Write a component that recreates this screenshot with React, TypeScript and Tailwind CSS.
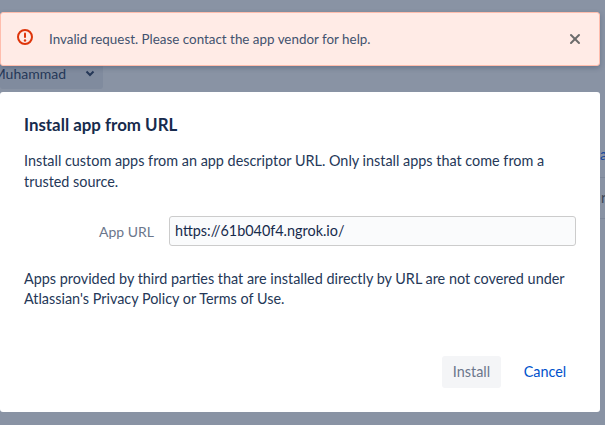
import { X } from "lucide-react";

const font = "font-['Lato','Noto_Sans',sans-serif]";

function AlertIcon() {
  return (
    <svg width="18" height="18" viewBox="0 0 18 18" fill="none" className="-mt-[4px] shrink-0">
      <circle cx="9" cy="9" r="7" stroke="#de350b" strokeWidth="2" />
      <rect x="8" y="4.5" width="2" height="5.5" rx="1" fill="#de350b" />
      <circle cx="9" cy="12.5" r="1.2" fill="#de350b" />
    </svg>
  );
}

export default function App() {
  return (
    <div className={`${font} relative h-[425px] w-[605px] overflow-hidden bg-[#8993a4] text-[14.4px] text-[#172b4d]`}>
      {/* page behind the dialog */}
      <div className="absolute left-0 top-[60px] flex h-[29px] w-[103px] items-center justify-end gap-[19px] rounded-[3px] bg-[#808b9e] pb-[2px] pr-[8px] text-[14px] text-[#253858]">
        <span className="shrink-0 whitespace-nowrap">Muhammad</span>
        <svg width="10" height="7" viewBox="0 0 10 7" fill="none" className="shrink-0">
          <path d="M1.5 1.5 5 5l3.5-3.5" stroke="#253858" strokeWidth="2" />
        </svg>
      </div>
      <div className="absolute left-[600px] top-[144px] text-[#1a4a9c]">a</div>
      <div className="absolute left-[600px] top-[177px] h-px w-[5px] bg-[#7d8799]" />
      <div className="absolute left-[601px] top-[187px] text-[#3a4658]">r</div>
      <div className="absolute left-[600px] top-[218px] h-px w-[5px] bg-[#7d8799]" />

      <div className="absolute left-0 top-[12px] flex h-[54px] w-[600px] items-center rounded-[3px] border border-[#ffbdad] bg-[#ffebe6] pl-[15px] pr-[16px] shadow-[0_2px_5px_rgba(9,30,66,0.25)]">
        <AlertIcon />
        <span className="ml-[15px] flex-1 text-[13.4px] text-[#42526e]">Invalid request. Please contact the app vendor for help.</span>
        <X size={16} strokeWidth={3} className="text-[#6b6b6b]" />
      </div>

      <div className="absolute left-0 top-[92px] flex h-[320px] w-[600px] flex-col rounded-[3px] bg-white px-6 pb-[24px] pt-[23px]">
        <h2 className="text-[16.9px] font-bold leading-5">Install app from URL</h2>
        <p className="mt-[15px] w-[552px] leading-[21px] text-[#253858]">
          Install custom apps from an app descriptor URL. Only install apps that come from a trusted source.
        </p>
        <div className="mt-[24px] flex items-center">
          <label className="w-[130px] text-right text-[14px] text-[#6b778c]">App URL</label>
          <div className="ml-[15px] flex h-[30px] w-[407px] items-center rounded-[3px] border border-[#ccc] bg-[#fafbfc] px-[5px]">
            https://61b040f4.ngrok.io/
          </div>
        </div>
        <p className="mt-[23px] w-[552px] leading-[20px] text-[#253858]">
          Apps provided by third parties that are installed directly by URL are not covered under Atlassian's Privacy Policy or Terms of Use.
        </p>
        <div className="mt-auto flex items-center justify-end">
          <button className="h-[32px] w-[59px] rounded-[3px] bg-[#f4f5f7] text-[#6b778c]">Install</button>
          <button className="ml-[13px] h-[32px] w-[62px] text-[#0052cc]">Cancel</button>
        </div>
      </div>
    </div>
  );
}
